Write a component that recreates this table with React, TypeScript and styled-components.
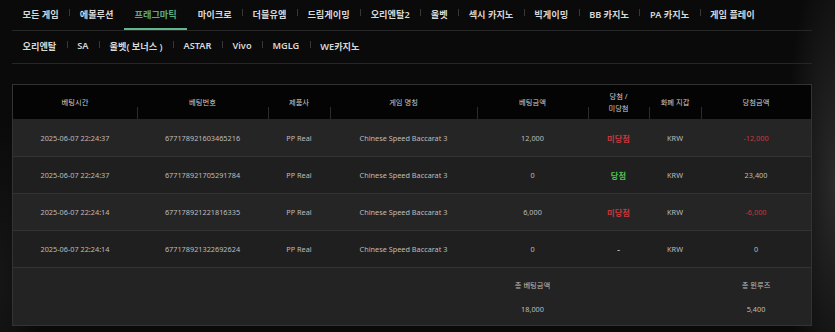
import React from 'react'
import styled, { createGlobalStyle } from 'styled-components'

const GlobalStyle = createGlobalStyle`
  html, body {
    margin: 0;
    padding: 0;
    height: 100%;
  }
  body {
    background-color: #0a0a0a;
    background-image:
      radial-gradient(ellipse 50px 240px at 100% 55%, #2a2a2a 0%, rgba(30,30,30,0) 100%),
      radial-gradient(ellipse 40px 160px at 0% 85%, #161616 0%, rgba(20,20,20,0) 100%);
    font-family: "Noto Sans", "Noto Sans CJK KR", sans-serif;
    overflow: hidden;
  }
`;

const Page = styled.div`
  width: 800px;
  margin-left: 12px;
  height: 332px;
`;

const TabRow = styled.nav<{ $height: number }>`
  display: flex;
  align-items: stretch;
  height: ${p => p.$height}px;
  border-bottom: 1px solid #262626;
`;

const Tab = styled.a<{ $active?: boolean }>`
  position: relative;
  display: flex;
  align-items: center;
  padding: 0 10.5px 3px;
  font-size: 9.2px;
  font-weight: 600;
  white-space: nowrap;
  color: ${p => (p.$active ? '#5aa981' : '#d8d8d8')};
  text-decoration: none;
  box-shadow: ${p => (p.$active ? 'inset 0 -2px 0 #5fb98c' : 'none')};

  & + &::before {
    content: '';
    position: absolute;
    left: 0;
    top: 50%;
    margin-top: -6px;
    width: 1px;
    height: 7px;
    background: #363636;
  }
`;

const Table = styled.div`
  margin-top: 20px;
  border: 1px solid #333;
  font-size: 7.3px;
  color: #bdbdbd;
`;

const columns = '124px 131px 62px 147px 111px 61px 52px 110px';

const HeadRow = styled.div`
  display: grid;
  grid-template-columns: ${columns};
  height: 34px;
  background: #040404;
`;

const HeadCell = styled.div`
  position: relative;
  display: flex;
  align-items: center;
  justify-content: center;
  text-align: center;
  line-height: 12px;
  color: #cfcfcf;

  & + &::before {
    content: '';
    position: absolute;
    left: 0;
    bottom: 0;
    width: 1px;
    height: 12px;
    background: #2c2c2c;
  }
`;

const BodyRow = styled.div<{ $odd: boolean }>`
  display: grid;
  grid-template-columns: ${columns};
  height: 37px;
  background: ${p => (p.$odd ? '#252525' : '#1f1f1f')};
  & + & {
    border-top: 1px solid #333;
    height: 36px;
  }
`;

const Cell = styled.div<{ $tone?: 'red' | 'green' }>`
  display: flex;
  align-items: center;
  justify-content: center;
  white-space: nowrap;
  color: ${p => (p.$tone === 'red' ? '#c8373d' : p.$tone === 'green' ? '#4fc24f' : '#bdbdbd')};
`;

const StatusCell = styled(Cell)`
  font-size: 8.3px;
  font-weight: 600;
`;

const FooterRow = styled.div`
  display: grid;
  grid-template-columns: ${columns};
  height: 57px;
  background: #232323;
  border-top: 1px solid #333;
`;

const Total = styled.div`
  display: flex;
  flex-direction: column;
  align-items: center;
  justify-content: center;
  gap: 14px;
  color: #bdbdbd;
`;

const mainTabs = ['모든 게임', '에볼루션', '프래그마틱', '마이크로', '더블유엠', '드림게이밍', '오리엔탈2', '울벳', '섹시 카지노', '빅게이밍', 'BB 카지노', 'PA 카지노', '게임 플레이']
const subTabs = ['오리엔탈', 'SA', '울벳( 보너스 )', 'ASTAR', 'Vivo', 'MGLG', 'WE카지노']

interface Bet {
  time: string
  id: string
  vendor: string
  game: string
  amount: string
  result: string
  currency: string
  win: string
}

const bets: Bet[] = [
  { time: '2025-06-07 22:24:37', id: '677178921603465216', vendor: 'PP Real', game: 'Chinese Speed Baccarat 3', amount: '12,000', result: '미당첨', currency: 'KRW', win: '-12,000' },
  { time: '2025-06-07 22:24:37', id: '677178921705291784', vendor: 'PP Real', game: 'Chinese Speed Baccarat 3', amount: '0', result: '당첨', currency: 'KRW', win: '23,400' },
  { time: '2025-06-07 22:24:14', id: '677178921221816335', vendor: 'PP Real', game: 'Chinese Speed Baccarat 3', amount: '6,000', result: '미당첨', currency: 'KRW', win: '-6,000' },
  { time: '2025-06-07 22:24:14', id: '677178921322692624', vendor: 'PP Real', game: 'Chinese Speed Baccarat 3', amount: '0', result: '-', currency: 'KRW', win: '0' },
]

const App: React.FC = () => {
  return (
    <>
      <GlobalStyle />
      <Page>
        <TabRow $height={30}>
          {mainTabs.map(t => (
            <Tab key={t} $active={t === '프래그마틱'}>{t}</Tab>
          ))}
        </TabRow>
        <TabRow $height={32}>
          {subTabs.map(t => (
            <Tab key={t}>{t}</Tab>
          ))}
        </TabRow>

        <Table>
          <HeadRow>
            <HeadCell>베팅시간</HeadCell>
            <HeadCell>베팅번호</HeadCell>
            <HeadCell>제품사</HeadCell>
            <HeadCell>게임 명칭</HeadCell>
            <HeadCell>베팅금액</HeadCell>
            <HeadCell>당첨 /<br />미당첨</HeadCell>
            <HeadCell>화폐 지갑</HeadCell>
            <HeadCell>당첨금액</HeadCell>
          </HeadRow>
          {bets.map((b, i) => (
            <BodyRow key={b.id} $odd={i % 2 === 0}>
              <Cell>{b.time}</Cell>
              <Cell>{b.id}</Cell>
              <Cell>{b.vendor}</Cell>
              <Cell>{b.game}</Cell>
              <Cell>{b.amount}</Cell>
              <StatusCell $tone={b.result === '미당첨' ? 'red' : b.result === '당첨' ? 'green' : undefined}>{b.result}</StatusCell>
              <Cell>{b.currency}</Cell>
              <Cell $tone={b.win.startsWith('-') ? 'red' : undefined}>{b.win}</Cell>
            </BodyRow>
          ))}
          <FooterRow>
            <div /><div /><div /><div />
            <Total>
              <span>총 베팅금액</span>
              <span>18,000</span>
            </Total>
            <div /><div />
            <Total>
              <span>총 윈루즈</span>
              <span>5,400</span>
            </Total>
          </FooterRow>
        </Table>
      </Page>
    </>
  )
}

export default App
